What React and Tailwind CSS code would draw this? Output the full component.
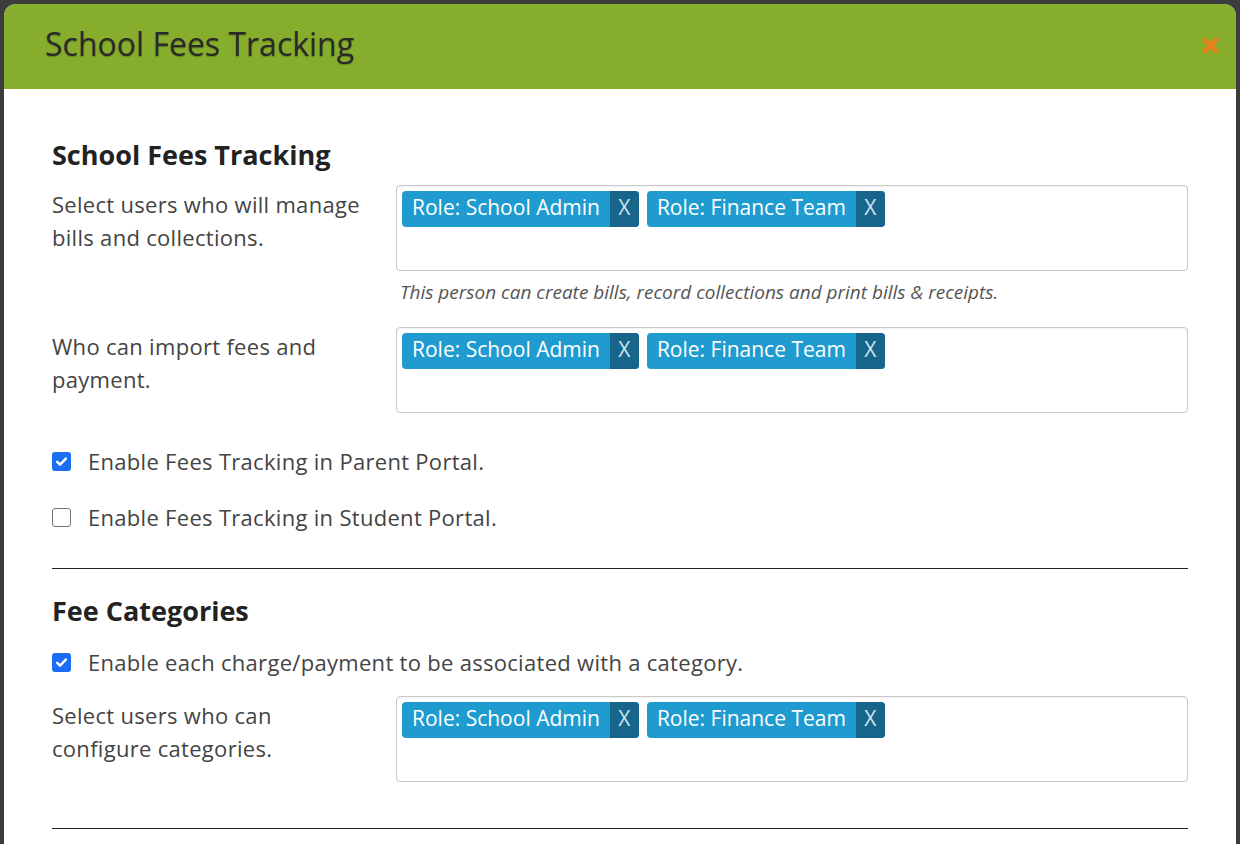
const font = { fontFamily: '"Open Sans", "Liberation Sans", sans-serif' };

function Chip({ label }) {
  return (
    <div className="flex h-[36px] items-stretch overflow-hidden rounded-[4px] bg-[#209bd0] text-[21px] text-white">
      <span className="flex items-center px-[10px] pb-[3px]">{label}</span>
      <span className="flex w-[29px] items-center justify-center bg-[#17658a] pb-[2px] text-[#cfe4ee]">X</span>
    </div>
  );
}

function RolePicker() {
  return (
    <div className="flex h-[86px] flex-1 flex-wrap content-start gap-[8px] rounded-[4px] border border-[#c9c9c9] p-[5px] shadow-[inset_0_1px_2px_rgba(0,0,0,0.06)]">
      <Chip label="Role: School Admin" />
      <Chip label="Role: Finance Team" />
    </div>
  );
}

function Checkbox({ checked, label, className }) {
  return (
    <label className={`flex items-center gap-[17px] text-[22px] leading-[33px] tracking-[0.3px] text-[#444] ${className}`}>
      {checked ? (
        <span className="flex h-[19px] w-[19px] items-center justify-center rounded-[3px] bg-[#1b6ef3]">
          <svg width="13" height="13" viewBox="0 0 12 12" fill="none">
            <path d="M2 6.3l2.6 2.6L10 3.3" stroke="white" strokeWidth="2.2" strokeLinecap="round" strokeLinejoin="round" />
          </svg>
        </span>
      ) : (
        <span className="h-[19px] w-[19px] rounded-[3px] border-[1.5px] border-[#767676] bg-white" />
      )}
      <span>{label}</span>
    </label>
  );
}

function FieldLabel({ children }) {
  return (
    <p className="w-[344px] shrink-0 pt-[3px] pr-[20px] text-[22px] leading-[33px] tracking-[0.3px] text-[#444]">
      {children}
    </p>
  );
}

export default function App() {
  return (
    <div className="min-h-[844px] overflow-hidden bg-[#3c3c3c] px-[4px] pt-[4px]" style={font}>
      <div className="overflow-hidden rounded-t-[12px] bg-white">
        <div className="flex h-[85px] items-center justify-between bg-[#87ad2c] pl-[41px] pr-[17px]">
          <h1 className="pb-[5px] text-[32px] text-[#2a2a2a] [text-shadow:0_1px_1px_rgba(0,0,0,0.25)]">School Fees Tracking</h1>
          <svg width="17" height="17" viewBox="0 0 16 16" className="mb-[2px]">
            <path d="M2.8 2.8l10.4 10.4M13.2 2.8L2.8 13.2" stroke="#e8821c" strokeWidth="4.4" strokeLinecap="round" />
          </svg>
        </div>

        <div className="px-[48px] pt-[50px] pb-[40px]">
          <h2 className="text-[27px] font-bold leading-[32px] text-[#222]">School Fees Tracking</h2>

          <div className="mt-[14px] flex">
            <FieldLabel>Select users who will manage bills and collections.</FieldLabel>
            <div className="flex-1">
              <RolePicker />
              <p className="mt-[10px] pl-[4px] text-[19px] leading-[22px] italic text-[#555]">
                This person can create bills, record collections and print bills &amp; receipts.
              </p>
            </div>
          </div>

          <div className="mt-[24px] flex">
            <FieldLabel>Who can import fees and payment.</FieldLabel>
            <RolePicker />
          </div>

          <Checkbox checked label="Enable Fees Tracking in Parent Portal." className="mt-[32px]" />
          <Checkbox label="Enable Fees Tracking in Student Portal." className="mt-[23px]" />

          <hr className="mt-[34px] border-t border-[#222]" />

          <h2 className="mt-[26px] text-[27px] font-bold leading-[32px] text-[#222]">Fee Categories</h2>
          <Checkbox checked label="Enable each charge/payment to be associated with a category." className="mt-[19px]" />

          <div className="mt-[17px] flex">
            <FieldLabel>Select users who can configure categories.</FieldLabel>
            <RolePicker />
          </div>

          <hr className="mt-[46px] border-t border-[#222]" />
        </div>
      </div>
    </div>
  );
}
